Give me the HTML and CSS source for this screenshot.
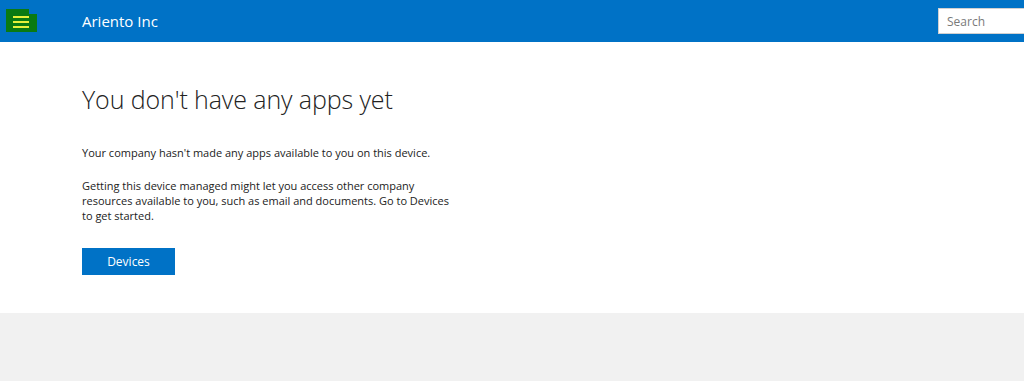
FILE: index.html
```html
<!DOCTYPE html>
<html>
<head>
<meta charset="utf-8">
<link rel="stylesheet" href="styles.css">
</head>
<body>
<header class="topbar">
  <div class="menu-btn">
    <span class="menu-bg1"></span>
    <span class="menu-bg2"></span>
    <span class="menu-lines"><i></i><i></i><i></i></span>
  </div>
  <div class="brand">Ariento Inc</div>
  <div class="search"><span class="search-ph">Search</span></div>
</header>
<main class="content">
  <h1 class="title">You don't have any apps yet</h1>
  <p class="para">Your company hasn't made any apps available to you on this device.</p>
  <p class="para wide">Getting this device managed might let you access other company resources available to you, such as email and documents. Go to Devices to get started.</p>
  <button class="btn">Devices</button>
</main>
<div class="footer-area"></div>
</body>
</html>
```
FILE: styles.css
```css
html, body {
  margin: 0;
  padding: 0;
  height: 100%;
}
body {
  font-family: "Open Sans", "Noto Sans", sans-serif;
  background: #f1f1f1;
  color: #222;
}
.topbar {
  height: 42px;
  background: #0072c6;
  display: flex;
  align-items: center;
  position: relative;
}
.menu-btn {
  position: relative;
  width: 82px;
  height: 42px;
  flex: none;
}
.menu-bg1 {
  position: absolute;
  left: 6px;
  top: 9px;
  width: 23px;
  height: 10px;
  background: #0a7a12;
}
.menu-bg2 {
  position: absolute;
  left: 6px;
  top: 14px;
  width: 31px;
  height: 18px;
  background: #0a7a12;
}
.menu-lines {
  position: absolute;
  left: 13px;
  top: 16px;
  width: 16px;
  display: flex;
  flex-direction: column;
  gap: 3px;
}
.menu-lines i {
  display: block;
  height: 2px;
  background: #e6f03a;
}
.brand {
  color: #fff;
  font-size: 15px;
  flex: 1;
  line-height: 20px;
  margin-top: -1px;
}
.search {
  width: 86px;
  height: 26px;
  background: #fff;
  border: 1px solid #d0d0d0;
  border-right: none;
  box-sizing: border-box;
  display: flex;
  align-items: center;
  padding-left: 8px;
}
.search-ph {
  font-size: 12px;
  color: #7a7a7a;
}
.content {
  background: #fff;
  padding: 39px 82px 0;
  height: 271px;
  box-sizing: border-box;
}
.title {
  margin: 0 0 28px;
  font-weight: 300;
  font-size: 25px;
  line-height: 36px;
  color: #222;
  letter-spacing: -0.1px;
}
.para {
  margin: 0 0 18px;
  font-size: 11px;
  line-height: 15px;
  color: #222;
}
.para.wide {
  width: 380px;
  margin-bottom: 25px;
}
.btn {
  display: block;
  width: 93px;
  height: 27px;
  background: #0072c6;
  border: none;
  color: #fff;
  font-family: inherit;
  font-size: 12px;
  padding: 0;
  cursor: pointer;
}
```
